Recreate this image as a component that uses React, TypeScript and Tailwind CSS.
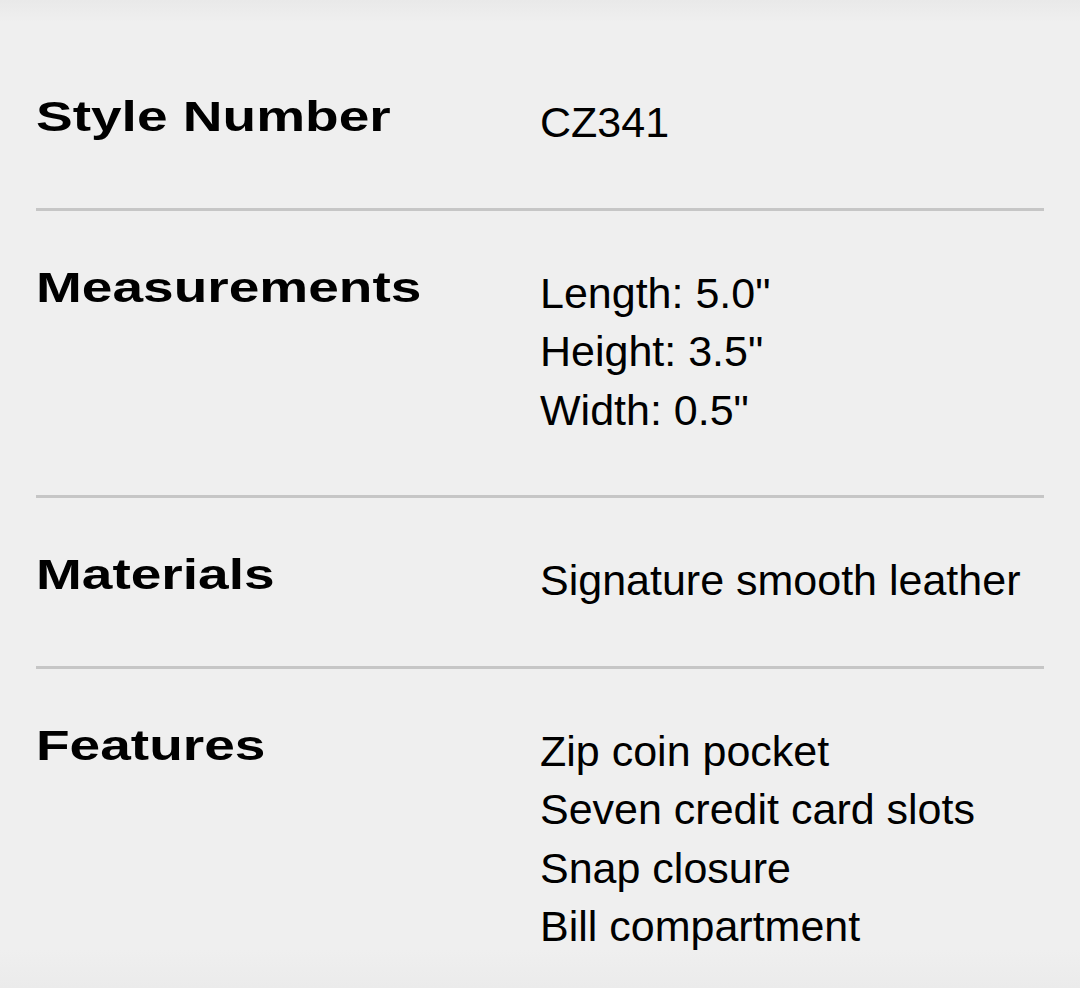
const specs: { label: string; lines: string[] }[] = [
  { label: "Style Number", lines: ["CZ341"] },
  { label: "Measurements", lines: ['Length: 5.0"', 'Height: 3.5"', 'Width: 0.5"'] },
  { label: "Materials", lines: ["Signature smooth leather"] },
  {
    label: "Features",
    lines: ["Zip coin pocket", "Seven credit card slots", "Snap closure", "Bill compartment"],
  },
];

function SpecRow({ label, lines, last }: { label: string; lines: string[]; last: boolean }) {
  return (
    <div
      className={
        last
          ? "grid grid-cols-[504px_1fr] pt-[53px] pb-[30px]"
          : "grid grid-cols-[504px_1fr] border-b-[3px] border-[#c6c6c6] pt-[53px] pb-[56px]"
      }
    >
      <div className="pt-[2px]">
        <span className="inline-block origin-left scale-x-[1.31] whitespace-nowrap font-['Liberation_Sans',Arial,sans-serif] text-[42px] font-bold leading-[44px] text-black">
          {label}
        </span>
      </div>
      <div className="font-['Liberation_Sans',Arial,sans-serif] text-[43px] leading-[58.5px] text-black">
        {lines.map((line) => (
          <div key={line}>{line}</div>
        ))}
      </div>
    </div>
  );
}

export default function App() {
  return (
    <div className="min-h-[988px] w-full bg-[linear-gradient(to_bottom,#e9e9e9_0px,#efefef_22px,#efefef_950px,#ebebeb_988px)]">
      <div className="px-[36px] pt-[40px]">
        {specs.map((s, i) => (
          <SpecRow key={s.label} label={s.label} lines={s.lines} last={i === specs.length - 1} />
        ))}
      </div>
    </div>
  );
}
